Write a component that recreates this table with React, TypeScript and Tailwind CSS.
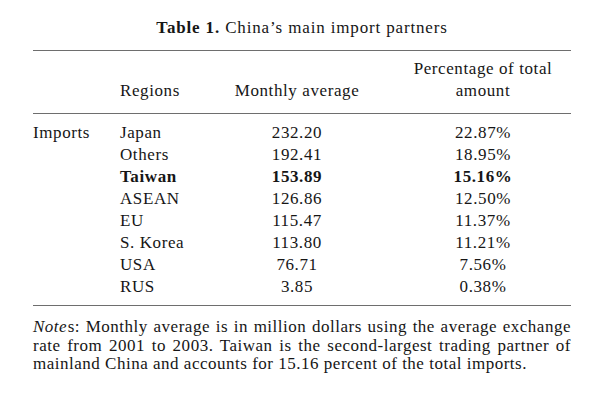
import React from "react";

interface Row {
  region: string;
  monthly: string;
  share: string;
  bold?: boolean;
}

const rows: Row[] = [
  { region: "Japan", monthly: "232.20", share: "22.87%" },
  { region: "Others", monthly: "192.41", share: "18.95%" },
  { region: "Taiwan", monthly: "153.89", share: "15.16%", bold: true },
  { region: "ASEAN", monthly: "126.86", share: "12.50%" },
  { region: "EU", monthly: "115.47", share: "11.37%" },
  { region: "S. Korea", monthly: "113.80", share: "11.21%" },
  { region: "USA", monthly: "76.71", share: "7.56%" },
  { region: "RUS", monthly: "3.85", share: "0.38%" },
];

const grid = "grid grid-cols-[87px_79px_196px_176px]";

const App: React.FC = () => {
  return (
    <div className="w-[602px] h-[403px] bg-white text-[#161616] font-['Liberation_Serif',serif] text-[17px] tracking-[0.035em]">
      <div className="w-[538px] ml-[33px] pt-[17px]">
        {/* title */}
        <p className="text-center leading-[22px] tracking-[0.05em]">
          <span className="font-bold">Table 1.</span> China’s main import partners
        </p>

        {/* header */}
        <div className={`${grid} mt-[11px] border-t-[1.5px] border-b-[1.5px] border-[#6e6e6e] pt-[7px] pb-[11px] leading-[22px]`}>
          <div />
          <div className="self-end">Regions</div>
          <div className="self-end text-center">Monthly average</div>
          <div className="text-center">
            Percentage of total
            <br />
            amount
          </div>
        </div>

        {/* body */}
        <div className="border-b-[1.5px] border-[#6e6e6e] pt-[8px] pb-[7px] leading-[22px]">
          {rows.map((r, i) => (
            <div key={r.region} className={`${grid} ${r.bold ? "font-bold" : ""}`}>
              <div>{i === 0 ? "Imports" : ""}</div>
              <div>{r.region}</div>
              <div className="text-center">{r.monthly}</div>
              <div className="text-center">{r.share}</div>
            </div>
          ))}
        </div>

        {/* notes */}
        <p className="mt-[12px] leading-[18.5px] text-justify tracking-[0.03em]">
          <i className="mr-[0.5px]">Note</i>s: Monthly average is in million dollars using the average exchange rate from 2001 to 2003. Taiwan is the second-largest trading partner of mainland China and accounts for 15.16 percent of the total imports.
        </p>
      </div>
    </div>
  );
};

export default App;
